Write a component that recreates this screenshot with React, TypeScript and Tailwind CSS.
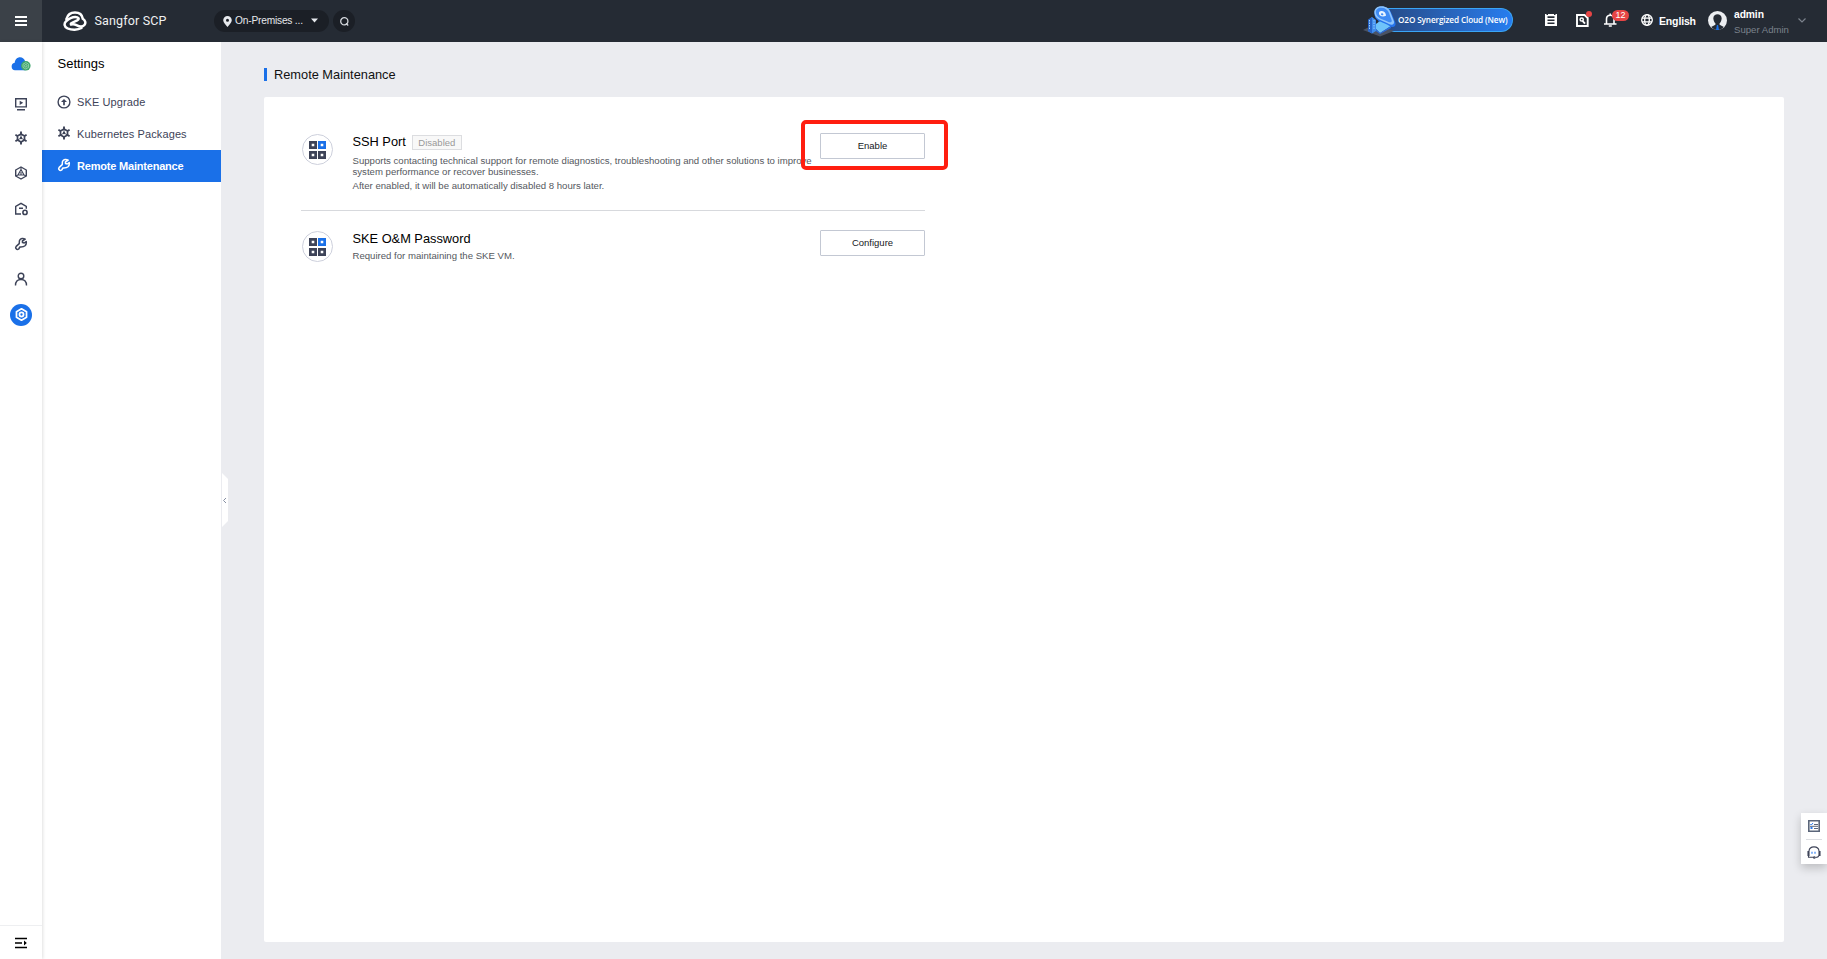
import React from "react";

type IconProps = { className?: string };

const Stroke = ({ className = "", children, size = 14 }: { className?: string; children: React.ReactNode; size?: number }) => (
  <svg className={`shrink-0 ${className}`} width={size} height={size} viewBox="0 0 14 14" fill="none" stroke="currentColor" strokeWidth="1.4">
    {children}
  </svg>
);

const Wheel = ({ className }: IconProps) => (
  <Stroke className={className}>
    <path d="M7 3 10.500 5v4L7 11 3.500 9V5z" strokeWidth="1.700" />
    <path d="M7 .6V3M7 11v2.400M1.400 3.800 3.500 5M10.500 9l2.100 1.200M1.400 10.200 3.500 9M10.500 5l2.100-1.200" strokeWidth="1.900" />
    <path d="M7 3v4M3.500 9 7 7l3.500 2" strokeWidth=".9" />
    <circle cx="7" cy="7" r="1.200" fill="currentColor" stroke="none" />
  </Stroke>
);

const Wrench = ({ className }: IconProps) => (
  <Stroke className={className}>
    <path d="M11.200 2.200C9.200 1.100 6.500 1.300 5.600 3.300c-.5 1.100-.1 2.200-.4 3.300L2.200 9.400c-1.400 1.700.6 4 2.500 2.600l1.200-2c1.700 0 3.500.3 5.100-1.200 1.200-1.200 1.500-2.700 1.200-4.300L10.200 6 8.500 5.600 8.400 4z" strokeWidth="1.500" strokeLinejoin="round" />
  </Stroke>
);

const Upgrade = () => (
  <Stroke>
    <circle cx="7" cy="7" r="5.900" />
    <path d="M7 10.300V5" strokeWidth="1.700" />
    <path d="M4 7 7 3.900 10 7z" fill="currentColor" stroke="none" />
  </Stroke>
);

const CloudGear = () => (
  <svg width="20" height="14" viewBox="0 0 20 14" className="shrink-0">
    <path d="M4 13.300a3.800 3.800 0 0 1-.3-7.500C4 2.500 6.300.3 9 .3c2.500 0 4.600 1.700 5.200 4.200a4.500 4.500 0 0 1 0 8.800z" fill="#1a70e8" />
    <circle cx="14.800" cy="8.800" r="4.800" fill="#3fa56b" />
    <path d="M14.800 5.600 17.600 7.200v3.200l-2.800 1.600-2.800-1.600V7.200z" fill="none" stroke="#a5d8b9" strokeWidth=".8" />
    <circle cx="14.800" cy="8.800" r="1.300" fill="none" stroke="#a5d8b9" strokeWidth=".8" />
  </svg>
);

const Monitor = () => (
  <Stroke className="text-[#3d4358]">
    <path d="M1.700 1.700h10.600v8.200H1.700zM3 12.800h8" />
    <path d="M5.700 3.700v4.200l3.500-2.100z" fill="currentColor" stroke="none" />
  </Stroke>
);

const Mesh = () => (
  <Stroke className="text-[#3d4358]">
    <path d="M7 1 12.300 4v6L7 13 1.700 10V4z" strokeLinejoin="round" />
    <path d="M7 1v2.500L4 9h6L7 3.500M4 9l-2.300 1M10 9l2.300 1M7 6v3" strokeWidth="1.1" />
  </Stroke>
);

const House = () => (
  <Stroke className="text-[#3d4358]">
    <path d="M7 12H1.700V4.400L7 1.300l5.300 3.100v2.300M5 6.300h4" />
    <circle cx="11" cy="10.400" r="2.100" strokeWidth="1.600" />
  </Stroke>
);

const Person = () => (
  <Stroke className="text-[#3d4358]">
    <circle cx="7" cy="4" r="2.800" />
    <path d="M1.500 13.500c0-3.800 2-6 5.500-6s5.500 2.200 5.500 6" />
  </Stroke>
);

const Hex = () => (
  <Stroke className="text-white" size={13}>
    <path d="M7 .9 12.400 4v6L7 13.100 1.600 10V4z" strokeWidth="1.900" strokeLinejoin="round" />
    <circle cx="7" cy="7" r="2.200" strokeWidth="1.900" />
  </Stroke>
);

const Logo = () => (
  <svg width="24" height="20" viewBox="0 0 24 20" fill="none" stroke="#fff" strokeWidth="2.500" strokeLinecap="round" className="shrink-0">
    <path d="M3.400 8C4.500 4.200 7.500 1.500 12 1.500c4.300 0 7.200 2.300 7.800 6.200 2.600 1.700 3.300 4.300 1.600 6.300-1.900 2.200-5.400 1.500-8 .1-2-1.100-3.300-1.300-5.400-.6" />
    <path d="M18.500 17c-3.800 2.200-9.900 2.100-14 .4C1.300 15.900.7 12.600 3 10.300 5.700 7.800 9 6 12.300 6c3 0 4.200 1.700 2.400 3.100-1.500 1.100-4.400 1.700-6.700 3.400" />
  </svg>
);

const Grid = () => (
  <span className="flex size-[31px] shrink-0 items-center justify-center rounded-full border-[1.500px] border-[#cdd0dc]">
    <svg width="17" height="18" viewBox="0 0 17 18" fill="none" strokeWidth="2.700">
      <path d="M1.350 1.350h5.300v5.300h-5.300zM1.350 11.350h5.300v5.300h-5.300zM10.350 11.350h5.300v5.300h-5.300z" stroke="#3d4358" />
      <path d="M10.350 1.350h5.300v5.300h-5.300z" stroke="#1a70e8" />
    </svg>
  </span>
);

const CloudBanner = () => (
  <div className="relative flex h-6 w-[147px] items-center rounded-r-full border border-l-0 border-[#3aa5f5] bg-gradient-to-r from-[#254478] to-[#267df0] pl-[32px]">
    <span className="whitespace-nowrap font-['Open_Sans',sans-serif] text-[8.200px] leading-none font-semibold tracking-[-0.120px] text-white">O2O Synergized Cloud (New)</span>
    <svg className="absolute -top-[3px] -left-[3px]" width="36" height="32" viewBox="0 0 36 32">
      <path d="M-1-1h16v27H-1z" fill="#252b34" />
      <path d="M0 24 12 18 31 25 17 30.500z" fill="#4a5364" />
      <path d="M10 20 20 13l8 7-11 7z" fill="#6fc3fa" />
      <path d="M10 20v3l7 5 11-6v-2l-11 7z" fill="#2a6ce0" />
      <path d="m5 14 4-3 4 3v11l-4 2.500L5 25z" fill="#3f8cec" />
      <path d="M9 11v16.500L5 25V14z" fill="#2865c8" />
      <path d="M6.500 14v10M11 14v10" stroke="#9bd2ff" strokeWidth="1" strokeDasharray="1.500 1" />
      <path d="M11.500 9C11 3.500 14 .5 18.500.5c5 0 8.500 2.500 10 7l4 9.500c.7 4-3 5-6 3-4.500-4-14-3.500-15-11" fill="#2674ec" />
      <path d="M11.500 7.500C10.500 3 14 .3 18.500.3c4.500 0 7.500 2.200 9 6.200l3.500 9c.7 3-2 4-5 2.500C21 15 12.500 14 11.500 7.500" fill="#8ec5fb" />
      <path d="M13 7c-.7-3.300 2-5.300 5.300-5.300 4 0 6.400 2 7.700 5.300l2.700 7.200c.5 2-1.500 2.800-3.700 1.600C21 13.500 14 13 13 7" fill="#3f8bf4" />
      <path d="M16 8c-.5-2.300 1-3.300 3-3 2.500.3 4 2.300 4 4.800-3 1.400-6.300.7-7-1.800" fill="#e9f4ff" />
      <path d="M18 8.300c0-1 1-1.300 1.800-.8.700.5.800 1.300.2 1.700-.8.400-2-.1-2-.9" fill="#3f8bf4" />
    </svg>
  </div>
);

const Header = () => (
  <header className="flex h-[42px] w-full shrink-0 items-center bg-[#252b34] text-white">
    <div className="flex h-full w-[42px] items-center justify-center bg-[#3b4148]">
      <svg width="12" height="10" viewBox="0 0 12 10" fill="#fff"><path d="M0 0h12v2H0zM0 4h12v2H0zM0 8h12v2H0z" /></svg>
    </div>
    <div className="flex w-[172px] items-center gap-[8px] pl-[20.500px]">
      <Logo />
      <span className="font-[Roboto,sans-serif] text-[12.500px] tracking-[0.150px] whitespace-nowrap text-[#f0f1f2]">Sangfor SCP</span>
    </div>
    <div className="flex h-[22px] w-[115px] items-center rounded-full bg-[#1b1f26] pl-[9px] text-[#e6e8ec]">
      <svg width="9" height="11" viewBox="0 0 9 11" className="shrink-0"><path fillRule="evenodd" d="M4.500 0a4.300 4.300 0 0 1 4.300 4.300C8.800 6.800 6 9 4.500 11 3 9 .2 6.800.2 4.300A4.300 4.300 0 0 1 4.500 0m0 2.700a1.500 1.500 0 1 0 0 3 1.500 1.500 0 0 0 0-3" fill="currentColor" /></svg>
      <span className="ml-[3px] w-[76px] text-[10.200px] tracking-[-0.200px] whitespace-nowrap">On-Premises ...</span>
      <svg width="7" height="5" viewBox="0 0 7 5" className="mb-px"><path d="M0 .5h7L3.500 4.500z" fill="currentColor" /></svg>
    </div>
    <div className="ml-[4px] flex size-[22px] items-center justify-center rounded-full bg-[#1b1f26] text-[#d5d8dd]">
      <svg width="9" height="9" viewBox="0 0 9 9" fill="none" stroke="currentColor" strokeWidth="1.300"><circle cx="4.300" cy="4.300" r="3.600" /><path d="m6 6.300 2.200 2.200" /></svg>
    </div>
    <div className="ml-auto flex h-full items-center">
      <div className="mr-[32px] pb-[2px]"><CloudBanner /></div>
      <svg width="12" height="12" viewBox="0 0 12 12" className="mr-[19px] mb-[2px]"><path fillRule="evenodd" d="M0 0h1.500v1h1.500V0h6v1h1.500V0H12v12H0zM2.500 2.300v1.700h7V2.300zm0 3.200v1.500h7V5.500zm0 3v1.500h7V8.500z" fill="#fff" /></svg>
      <div className="relative mr-[15px] mb-[2px]">
        <svg width="13" height="13" viewBox="0 0 13 13" fill="none" stroke="#fff"><path d="M1 1h7.500L11.700 4v8H1z" strokeWidth="1.900" /><circle cx="5.700" cy="5.500" r="1.600" strokeWidth="1.500" /><path d="m6.500 6.800 2.500 2.800" strokeWidth="1.800" /></svg>
        <span className="absolute -top-[3px] left-[10px] size-[6px] rounded-full bg-[#e64545]" />
      </div>
      <div className="relative mr-[24px] mb-[2px]">
        <svg width="13" height="14" viewBox="0 0 13 14" fill="none" stroke="#fff" strokeWidth="1.600"><path d="M0 11h12.500M2.500 11V6c0-5 7.500-5 7.500 0v5M6.200.5v2M4.800 13h3" /></svg>
        <span className="absolute -top-[3px] left-[8px] flex h-[11px] w-[17px] items-center justify-center rounded-full bg-[#e64545] text-[9px] leading-none">12</span>
      </div>
      <svg width="12" height="12" viewBox="0 0 12 12" fill="none" stroke="#fff" strokeWidth="1.300" className="mb-[2px]"><circle cx="6" cy="6" r="5.300" /><ellipse cx="6" cy="6" rx="2.300" ry="5.300" /><path d="M1 4.200h10M1 7.800h10" /></svg>
      <span className="ml-[6px] w-[43px] pt-px text-[10.500px] font-bold tracking-[-0.150px]">English</span>
      <svg width="19" height="19" viewBox="0 0 19 19" className="mt-[-2px] ml-[6px]">
        <circle cx="9.500" cy="9.500" r="9.500" fill="#eceef1" />
        <path d="M5.400 8c-1-6.500 9.200-6.500 8.200 0-.3 2.300-1.200 3.600-2 4.300v1.500l4.300 2.200c-3.500 4-9.300 4-12.800 0l4.300-2.200v-1.500c-.8-.7-1.700-2-2-4.300" fill="#252b34" />
        <path d="M8.900 14h1.200l.9 5H8z" fill="#1a70e8" />
      </svg>
      <div className="ml-[7px] flex w-[64px] flex-col pt-[2px] whitespace-nowrap">
        <span className="text-[10.300px] leading-[15px] font-bold tracking-[-0.100px]">admin</span>
        <span className="text-[9.600px] leading-[15px] text-[#7b828c]">Super Admin</span>
      </div>
      <svg width="8" height="5" viewBox="0 0 8 5" fill="none" stroke="#7b828c" strokeWidth="1.200" className="mr-[21px] mb-[2px]"><path d="m.5.5 3.500 3.500L7.500.5" /></svg>
    </div>
  </header>
);

const Rail = () => (
  <nav className="z-10 flex w-[42px] shrink-0 flex-col items-center bg-white text-[#3d4358] shadow-[1px_0_3px_rgba(0,0,0,0.12)]">
    <div className="flex h-[44px] items-center"><CloudGear /></div>
    <div className="flex h-[35px] items-center"><Monitor /></div>
    <div className="flex h-[35px] items-center pb-[2px]"><Wheel /></div>
    <div className="flex h-[35px] items-center pb-[2px]"><Mesh /></div>
    <div className="flex h-[35px] items-center"><House /></div>
    <div className="flex h-[35px] items-center"><Wrench /></div>
    <div className="flex h-[36px] items-center"><Person /></div>
    <div className="mt-[7px] flex size-[22px] items-center justify-center rounded-full bg-[#1a70e8] pb-px"><Hex /></div>
    <div className="mt-auto flex h-[34px] w-full items-center justify-center border-t border-[#eeeff1] text-black">
      <svg width="12" height="12" viewBox="0 0 12 12" fill="currentColor"><path d="M0 .700h12v1.500H0zM0 5.200h7v1.500H0zM9 3.500 11.800 6 9 8.500zM0 9.700h12v1.500H0z" /></svg>
    </div>
  </nav>
);

const Sidebar = () => (
  <aside className="w-[179px] shrink-0 bg-white text-[#3d4358]">
    <h2 className="flex h-[44px] items-center pl-[15.500px] text-[13px] text-black">Settings</h2>
    <ul className="text-[11px] tracking-[0.110px]">
      <li className="flex h-8 items-center gap-[6px] pl-[15px]"><Upgrade />SKE Upgrade</li>
      <li className="flex h-8 items-center gap-[6px] pl-[15px]"><Wheel className="mb-[2px]" />Kubernetes Packages</li>
      <li className="flex h-8 items-center gap-[6px] bg-[#1a70e8] pl-[15px] font-bold tracking-[-0.200px] text-white"><Wrench className="mb-[2px]" />Remote Maintenance</li>
    </ul>
  </aside>
);

const Action = ({ label }: { label: string }) => (
  <button className="h-[26px] w-[105px] shrink-0 rounded-[1px] border border-[#c3c8d3] bg-white text-[9.500px] text-[#16181c]">{label}</button>
);

export default function App() {
  return (
    <div className="flex h-[959px] w-[1827px] flex-col overflow-hidden bg-[#ebecf0] font-['Liberation_Sans',Arial,sans-serif]">
      <Header />
      <div className="relative flex min-h-0 flex-1">
        <Rail />
        <Sidebar />
        <main className="flex flex-1 flex-col pr-[43px] pb-[17px] pl-[43px]">
          <h1 className="flex h-[55px] items-center gap-[7px] pt-[10px] text-[12.800px] text-[#111]">
            <span className="h-[13px] w-[3px] bg-[#1a70e8]" />Remote Maintenance
          </h1>
          <section className="flex-1 rounded-[2px] bg-white pt-[34px] pl-[37px]">
            <div className="flex h-[80px] w-[624px] border-b border-[#d7d9dd]">
              <div className="pt-[3px] pl-px"><Grid /></div>
              <div className="ml-[19.500px] w-[467.500px] text-[9.600px] leading-[11px] text-[#55585e]">
                <div className="flex h-[20px] items-center gap-[6px]">
                  <span className="text-[12.800px] text-black">SSH Port</span>
                  <span className="mt-[2px] flex h-[15px] w-[50px] items-center justify-center border border-[#dcdde0] bg-[#f8f8f8] text-[9.500px] text-[#999]">Disabled</span>
                </div>
                <p className="mt-[4px] whitespace-nowrap">Supports contacting technical support for remote diagnostics, troubleshooting and other solutions to improve<br />system performance or recover businesses.</p>
                <p className="mt-[3px]">After enabled, it will be automatically disabled 8 hours later.</p>
              </div>
              <div className="relative mt-[2px] h-[26px]">
                <div className="flex"><Action label="Enable" /></div>
                <span className="absolute -top-[13px] -left-[19px] h-[50px] w-[147px] rounded-[5px] border-4 border-[#ff1e10]" />
              </div>
            </div>
            <div className="flex w-[624px] pt-[19px]">
              <div className="pt-px pl-px"><Grid /></div>
              <div className="ml-[19.500px] w-[467.500px]">
                <div className="h-[17px] text-[12.800px] leading-[17px] text-black">SKE O&amp;M Password</div>
                <p className="mt-[3px] text-[9.600px] leading-[12px] text-[#55585e]">Required for maintaining the SKE VM.</p>
              </div>
              <Action label="Configure" />
            </div>
          </section>
        </main>
        <svg className="absolute top-[431px] left-[222px]" width="6" height="54" viewBox="0 0 6 54"><path d="M0 0 6 6v42L0 54z" fill="#fff" /><path d="m4 25-2.500 2.500L4 30" fill="none" stroke="#8790a3" /></svg>
        <div className="absolute top-[771px] right-0 flex h-[51px] w-[26px] flex-col items-center bg-white shadow-[0_4px_10px_rgba(0,0,0,0.2)]">
          <div className="flex h-[27px] w-[16px] items-center justify-center border-b border-[#dcdee2]">
            <svg width="12" height="12" viewBox="0 0 12 12" fill="none"><path d="M.8.800h10.400v10.400H.8z" stroke="#5b667a" strokeWidth="1.600" /><path d="m2.300 4 1 1 1.700-2" stroke="#2b7cf0" /><path d="M2.500 7h2v2h-2z" fill="#2b7cf0" /><path d="M6 4.500h4M6 8.500h4M2 6.300h8" stroke="#5b667a" /></svg>
          </div>
          <div className="flex h-[24px] items-center">
            <svg width="14" height="13" viewBox="0 0 14 13" fill="none" stroke="#3d4358" strokeWidth="1.100"><path d="M2 5c.5-5.500 9.500-5.500 10 0M1 5.500h1v4H1zM12 5.500h1v4h-1zM1.500 9.500v1.700H6M12 9.500c-.5 1.600-2 2-3.500 2" /><circle cx="7.300" cy="11.500" r=".8" /><path d="M5 5.700v2M8 5.700v2" stroke="#2b7cf0" /></svg>
          </div>
        </div>
      </div>
    </div>
  );
}
